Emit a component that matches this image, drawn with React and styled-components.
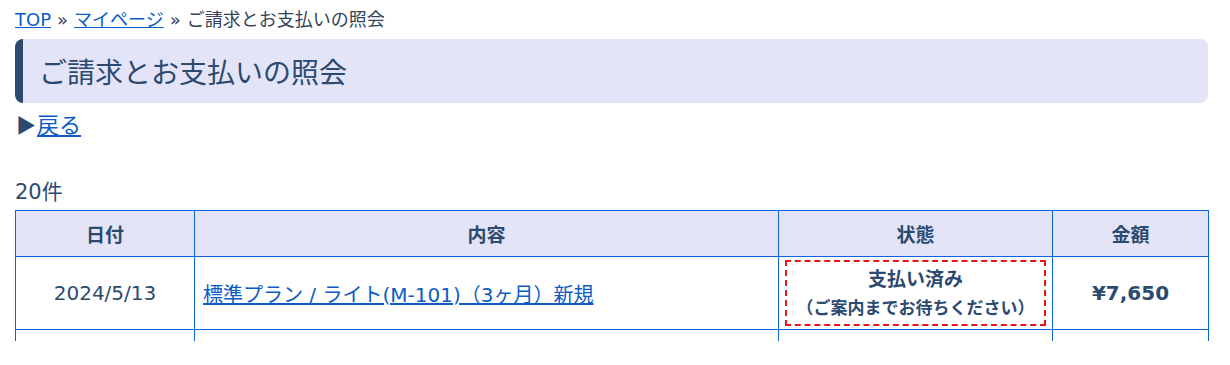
import React from "react";
import styled, { createGlobalStyle } from "styled-components";

const Global = createGlobalStyle`
  html, body { margin: 0; padding: 0; background: #fff; }
  body {
    font-family: "DejaVu Sans", "Noto Sans CJK JP", sans-serif;
    color: #2c4a70;
  }
`;

const Page = styled.div`
  width: 1193px;
  padding: 6px 0 0 15px;
`;

const Crumbs = styled.nav`
  font-size: 18px;
  line-height: 28px;
  color: #33435a;
  a { color: #0b5cc4; text-decoration: underline; }
`;

const Sep = styled.span`
  margin: 0 6px;
`;

const Title = styled.h1`
  margin: 5px 0 0;
  height: 64px;
  box-sizing: border-box;
  display: flex;
  align-items: center;
  padding-left: 16px;
  background: #e4e4f8;
  border-left: 8px solid #2c4a70;
  border-radius: 8px;
  font-size: 28px;
  font-weight: 400;
  color: #2c4a70;
`;

const Back = styled.div`
  margin-top: 6px;
  font-size: 22px;
  line-height: 32px;
  color: #2c4a70;
  a { color: #0b5cc4; text-decoration: underline; }
`;

const Arrow = styled.span`
  display: inline-block;
  margin-left: 1px;
  margin-right: 1px;
  font-family: "Noto Sans CJK JP", sans-serif;
  font-size: 20px;
`;

const Count = styled.div`
  margin-top: 36px;
  font-size: 21px;
  line-height: 28px;
  color: #2c4a70;
`;

const Table = styled.table`
  width: 100%;
  border-collapse: collapse;
  margin-top: 4px;
  table-layout: fixed;
`;

const Th = styled.th`
  height: 45px;
  background: #e4e4f8;
  border: 1px solid #0a66d6;
  font-size: 19px;
  font-weight: 700;
  color: #2c4a70;
  text-align: center;
  padding: 0;
`;

const Td = styled.td`
  height: ${p => p.$h || 72}px;
  border: 1px solid #0a66d6;
  border-bottom: ${p => (p.$open ? "none" : "1px solid #0a66d6")};
  text-align: ${p => p.$align || "center"};
  vertical-align: middle;
  font-size: ${p => p.$size || 20}px;
  font-weight: ${p => (p.$bold ? 700 : 400)};
  color: #2c4a70;
  padding: ${p => p.$pad || "0"};
  a { color: #0b5cc4; text-decoration: underline; }
`;

const StatusBox = styled.div`
  margin: 0 auto;
  width: 261px;
  height: 66px;
  box-sizing: border-box;
  border: 2px dashed #e8141a;
  display: flex;
  flex-direction: column;
  align-items: center;
  justify-content: center;
  font-weight: 700;
  color: #2c4a70;
`;

const StatusMain = styled.div`
  font-size: 19px;
  line-height: 29px;
`;

const StatusSub = styled.div`
  font-size: 17px;
  line-height: 28px;
`;

export default function App() {
  return (
    <>
      <Global />
      <Page>
        <Crumbs>
          <a href="#">TOP</a>
          <Sep>»</Sep>
          <a href="#">マイページ</a>
          <Sep>»</Sep>
          ご請求とお支払いの照会
        </Crumbs>
        <Title>ご請求とお支払いの照会</Title>
        <Back>
          <Arrow>▶</Arrow>
          <a href="#">戻る</a>
        </Back>
        <Count>20件</Count>
        <Table>
          <colgroup>
            <col style={{ width: "179px" }} />
            <col style={{ width: "584px" }} />
            <col style={{ width: "274px" }} />
            <col style={{ width: "156px" }} />
          </colgroup>
          <thead>
            <tr>
              <Th>日付</Th>
              <Th>内容</Th>
              <Th>状態</Th>
              <Th>金額</Th>
            </tr>
          </thead>
          <tbody>
            <tr>
              <Td>2024/5/13</Td>
              <Td $align="left" $pad="0 8px">
                <a href="#">標準プラン / ライト(M-101)（3ヶ月）新規</a>
              </Td>
              <Td>
                <StatusBox>
                  <StatusMain>支払い済み</StatusMain>
                  <StatusSub>（ご案内までお待ちください）</StatusSub>
                </StatusBox>
              </Td>
              <Td $bold>¥7,650</Td>
            </tr>
            <tr>
              <Td $h={11} $open />
              <Td $h={11} $open />
              <Td $h={11} $open />
              <Td $h={11} $open />
            </tr>
          </tbody>
        </Table>
      </Page>
    </>
  );
}
